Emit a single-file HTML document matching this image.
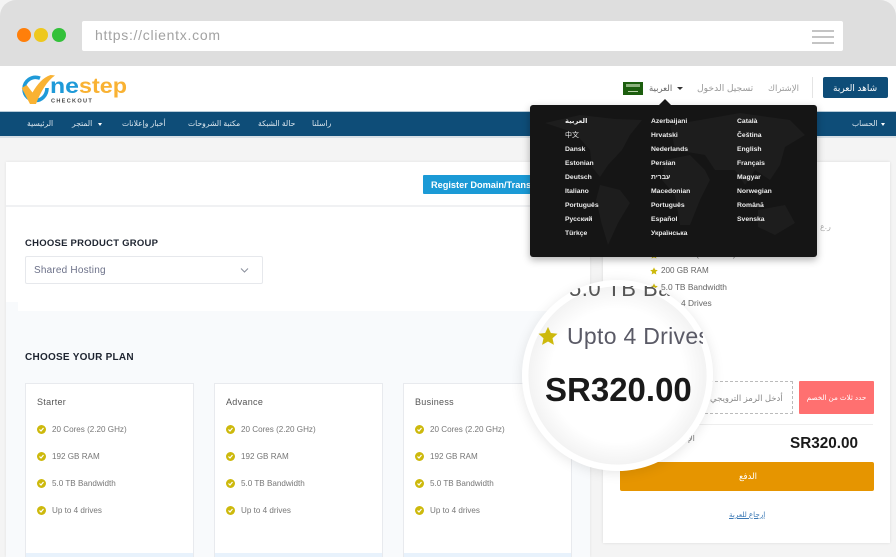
<!DOCTYPE html>
<html lang="ar"><head><meta charset="utf-8"><title>Onestep Checkout</title>
<style>
html,body{margin:0;padding:0;background:#fff}
#p{position:relative;width:896px;height:557px;overflow:hidden;background:#f4f4f4;font-family:"Liberation Sans","DejaVu Sans","Noto Sans CJK SC",sans-serif;color:#555}
#p div,#p a{position:absolute;white-space:nowrap}
.t{line-height:14px;transform:translateY(-7px)}
.nav{color:#dfe9f0;font-size:7.6px}
.lang{color:#eee;font-size:6.8px;font-weight:bold;line-height:14px}
.card{background:#fff;border:1px solid #e8eaee;box-sizing:border-box;width:169px;height:180px;top:383px}
.name{left:11px;top:11px;font-size:9px;color:#555;letter-spacing:.3px;line-height:14px}
.f{left:26px;font-size:8.1px;color:#777;line-height:12px;margin-top:1px}
.c{left:11px;width:9px;height:9px;border-radius:50%;background:#cdb90c}
.c svg{position:absolute;left:0;top:0}
.btm{left:0;right:0;height:9px;background:#e8f2fc;top:169px}
</style></head><body><div id="p">

<div style="left:0;top:0;width:896px;height:66px;background:#dedede;border-radius:16px 16px 0 0"></div>
<div style="left:17px;top:28px;width:14px;height:14px;border-radius:50%;background:#ff7f0a"></div>
<div style="left:34px;top:28px;width:14px;height:14px;border-radius:50%;background:#eec81e"></div>
<div style="left:52px;top:28px;width:14px;height:14px;border-radius:50%;background:#33c13a"></div>
<div style="left:82px;top:21px;width:761px;height:30px;background:#fff;border-radius:2px"></div>
<div style="left:95px;top:27px;font-size:14px;line-height:16px;color:#a2a2a2;letter-spacing:.72px">https://clientx.com</div>
<div style="left:812px;top:30px;width:22px;height:2px;background:#c4c4c4"></div>
<div style="left:812px;top:36px;width:22px;height:2px;background:#c4c4c4"></div>
<div style="left:812px;top:42px;width:22px;height:2px;background:#c4c4c4"></div>

<div style="left:0;top:66px;width:896px;height:46px;background:#fff"></div>

<svg style="position:absolute;left:18px;top:70px" width="115" height="36" viewBox="0 0 115 36">
<path d="M22 8.200C14 5 6 11 6 19C6 26 11.500 30.500 17.500 30.500C24 30.500 29 25 29 18" fill="none" stroke="#1f9ad8" stroke-width="3.600"/>
<path d="M3.700 18L8.700 15L14.500 22.500C19.500 14 25 7.500 32.500 5C33.500 5 37 5.500 37 5.500C29 11 23 21 18 34L12 34Z" fill="#f9b233"/>
<text x="32" y="23" font-family="Liberation Sans" font-size="21" fill="#1f9ad8" textLength="29" lengthAdjust="spacingAndGlyphs" font-weight="bold">ne</text>
<text x="61" y="23" font-family="Liberation Sans" font-size="21" fill="#f9b233" font-weight="bold" textLength="48" lengthAdjust="spacingAndGlyphs">step</text>
<text x="33" y="32.500" font-family="Liberation Sans" font-size="5.600" font-weight="bold" fill="#444" letter-spacing="1.300">CHECKOUT</text>
</svg>

<div style="left:623px;top:82px;width:20px;height:13px;background:#1c5e0e"></div>
<div style="left:626px;top:84px;width:14px;height:3px;background:#a9c59a;opacity:.8"></div>
<div style="left:628px;top:91px;width:10px;height:1px;background:#b7d0a8"></div>
<div class="t" style="left:649px;top:88px;font-size:8.500px;color:#666">العربية</div>
<div style="left:677px;top:87px;border:3px solid transparent;border-top:3px solid #333;border-bottom:0"></div>
<div class="t" style="left:697px;top:88px;font-size:9.200px;color:#999">تسجيل الدخول</div>
<div class="t" style="left:768px;top:88px;font-size:8.500px;color:#999">الإشتراك</div>
<div style="left:812px;top:77px;width:1px;height:21px;background:#e4e4e4"></div>
<div style="left:823px;top:77px;width:65px;height:21px;background:#0e4d78;border-radius:2px"></div>
<div class="t" style="left:833px;top:88px;font-size:9px;color:#fff">شاهد العربة</div>

<div style="left:0;top:111px;width:896px;height:1px;background:#b8cbd8"></div>
<div style="left:0;top:112px;width:896px;height:24px;background:#0e4d78"></div>
<div style="left:0;top:136px;width:896px;height:2px;background:#d7dfe5"></div>
<div class="t nav" style="left:27px;top:124px">الرئيسية</div>
<div class="t nav" style="left:72px;top:124px">المتجر</div>
<div style="left:98px;top:123px;border:2.500px solid transparent;border-top:3px solid #fff;border-bottom:0"></div>
<div class="t nav" style="left:122px;top:124px">أخبار وإعلانات</div>
<div class="t nav" style="left:188px;top:124px">مكتبة الشروحات</div>
<div class="t nav" style="left:258px;top:124px">حالة الشبكة</div>
<div class="t nav" style="left:312px;top:124px">راسلنا</div>
<div style="left:881px;top:123px;border:2.500px solid transparent;border-top:3px solid #fff;border-bottom:0"></div>
<div class="t nav" style="left:852px;top:124px">الحساب</div>

<!-- left panel -->
<div style="left:6px;top:162px;width:584px;height:395px;background:#fff;box-shadow:0 0 3px rgba(0,0,0,.08)"></div>
<div style="left:6px;top:205px;width:584px;height:2px;background:#f0f1f3"></div>
<div style="left:423px;top:175px;width:130px;height:19px;background:#1b9ad6;border-radius:1px"></div>
<div class="t" style="left:431px;top:185px;font-size:9.200px;font-weight:bold;color:#fff">Register Domain/Transfer</div>
<div class="t" style="left:25px;top:244px;font-size:9.500px;font-weight:bold;color:#1e2430;letter-spacing:.25px">CHOOSE PRODUCT GROUP</div>
<div style="left:25px;top:256px;width:238px;height:28px;background:#fff;border:1px solid #e6e8ec;box-sizing:border-box;border-radius:2px"></div>
<div class="t" style="left:34px;top:271px;font-size:10px;color:#6c7189;letter-spacing:.2px">Shared Hosting</div>
<svg style="position:absolute;left:240px;top:267px" width="9" height="7" viewBox="0 0 9 7"><path d="M1 1.500L4.500 5L8 1.500" fill="none" stroke="#8a8f9c" stroke-width="1"/></svg>
<div style="left:6px;top:302px;width:12px;height:255px;background:#f8fafc"></div>
<div style="left:18px;top:311px;width:572px;height:246px;background:#f8fafc"></div>
<div class="t" style="left:25px;top:358px;font-size:10px;font-weight:bold;color:#1e2430;letter-spacing:.25px">CHOOSE YOUR PLAN</div>

<div class="card" style="left:25px">
<div class="name">Starter</div>
<div class="c" style="top:41px"><svg width="9" height="9"><path d="M2.500 4.500L4 6L6.500 3" fill="none" stroke="#fff" stroke-width="1.200"/></svg></div><div class="f" style="top:39px">20 Cores (2.20 GHz)</div>
<div class="c" style="top:68px"><svg width="9" height="9"><path d="M2.500 4.500L4 6L6.500 3" fill="none" stroke="#fff" stroke-width="1.200"/></svg></div><div class="f" style="top:66px">192 GB RAM</div>
<div class="c" style="top:95px"><svg width="9" height="9"><path d="M2.500 4.500L4 6L6.500 3" fill="none" stroke="#fff" stroke-width="1.200"/></svg></div><div class="f" style="top:93px">5.0 TB Bandwidth</div>
<div class="c" style="top:122px"><svg width="9" height="9"><path d="M2.500 4.500L4 6L6.500 3" fill="none" stroke="#fff" stroke-width="1.200"/></svg></div><div class="f" style="top:120px">Up to 4 drives</div>
<div class="btm"></div></div>

<div class="card" style="left:214px">
<div class="name">Advance</div>
<div class="c" style="top:41px"><svg width="9" height="9"><path d="M2.500 4.500L4 6L6.500 3" fill="none" stroke="#fff" stroke-width="1.200"/></svg></div><div class="f" style="top:39px">20 Cores (2.20 GHz)</div>
<div class="c" style="top:68px"><svg width="9" height="9"><path d="M2.500 4.500L4 6L6.500 3" fill="none" stroke="#fff" stroke-width="1.200"/></svg></div><div class="f" style="top:66px">192 GB RAM</div>
<div class="c" style="top:95px"><svg width="9" height="9"><path d="M2.500 4.500L4 6L6.500 3" fill="none" stroke="#fff" stroke-width="1.200"/></svg></div><div class="f" style="top:93px">5.0 TB Bandwidth</div>
<div class="c" style="top:122px"><svg width="9" height="9"><path d="M2.500 4.500L4 6L6.500 3" fill="none" stroke="#fff" stroke-width="1.200"/></svg></div><div class="f" style="top:120px">Up to 4 drives</div>
<div class="btm"></div></div>

<div class="card" style="left:403px">
<div class="name">Business</div>
<div class="c" style="top:41px"><svg width="9" height="9"><path d="M2.500 4.500L4 6L6.500 3" fill="none" stroke="#fff" stroke-width="1.200"/></svg></div><div class="f" style="top:39px">20 Cores (2.20 GHz)</div>
<div class="c" style="top:68px"><svg width="9" height="9"><path d="M2.500 4.500L4 6L6.500 3" fill="none" stroke="#fff" stroke-width="1.200"/></svg></div><div class="f" style="top:66px">192 GB RAM</div>
<div class="c" style="top:95px"><svg width="9" height="9"><path d="M2.500 4.500L4 6L6.500 3" fill="none" stroke="#fff" stroke-width="1.200"/></svg></div><div class="f" style="top:93px">5.0 TB Bandwidth</div>
<div class="c" style="top:122px"><svg width="9" height="9"><path d="M2.500 4.500L4 6L6.500 3" fill="none" stroke="#fff" stroke-width="1.200"/></svg></div><div class="f" style="top:120px">Up to 4 drives</div>
<div class="btm"></div></div>

<!-- right panel -->
<div style="left:603px;top:162px;width:287px;height:381px;background:#fff;box-shadow:0 0 3px rgba(0,0,0,.1)"></div>
<div class="t" style="left:820px;top:227px;font-size:8px;color:#aaa">ر.ع</div>
<svg style="position:absolute;left:650px;top:251px" width="8" height="8" viewBox="0 0 24 24"><path d="M12 1l3.400 7.400 8 .9-6 5.400 1.700 7.900L12 18.600 4.900 22.600l1.700-7.900-6-5.400 8-.9z" fill="#cdb90c"/></svg>
<div class="t" style="left:661px;top:255px;font-size:8.100px;color:#666">20 Cores (2.20 GHz)</div>
<svg style="position:absolute;left:650px;top:267px" width="8" height="8" viewBox="0 0 24 24"><path d="M12 1l3.400 7.400 8 .9-6 5.400 1.700 7.900L12 18.600 4.900 22.600l1.700-7.900-6-5.400 8-.9z" fill="#cdb90c"/></svg>
<div class="t" style="left:661px;top:271px;font-size:8.100px;color:#666">200 GB RAM</div>
<svg style="position:absolute;left:650px;top:283px" width="8" height="8" viewBox="0 0 24 24"><path d="M12 1l3.400 7.400 8 .9-6 5.400 1.700 7.900L12 18.600 4.900 22.600l1.700-7.900-6-5.400 8-.9z" fill="#cdb90c"/></svg>
<div class="t" style="left:661px;top:287px;font-size:8.400px;color:#666">5.0 TB Bandwidth</div>
<div class="t" style="left:661px;top:303px;font-size:8.400px;color:#666">Upto 4 Drives</div>

<div style="left:620px;top:381px;width:173px;height:33px;box-sizing:border-box;border:1px dashed #bbb"></div>
<div class="t" style="left:710px;top:398px;font-size:8.500px;color:#888">أدخل الرمز الترويجي</div>
<div style="left:799px;top:381px;width:75px;height:33px;background:#ff7070;border-radius:1px"></div>
<div class="t" style="left:799px;width:75px;text-align:center;top:398px;font-size:7.200px;color:#fff">حدد ثلاث من الخصم</div>
<div style="left:620px;top:424px;width:253px;height:1px;background:#eee"></div>
<div class="t" style="left:667px;top:439px;font-size:8px;color:#777">الإجمالي</div>
<div class="t" style="left:790px;top:444px;font-size:15.300px;font-weight:bold;color:#1a1a1a">SR320.00</div>
<div style="left:620px;top:462px;width:254px;height:29px;background:#e69500;border-radius:2px"></div>
<div class="t" style="left:739px;top:476px;font-size:8.500px;color:#fff">الدفع</div>
<a class="t" style="left:729px;top:515px;font-size:7.200px;color:#3a78b5;text-decoration:underline">إرجاع للعربة</a>

<!-- lens -->
<div style="left:522px;top:280px;width:191px;height:191px;border-radius:50%;background:radial-gradient(circle closest-side,#fff 0%,#fff 70%,#f3f3f3 93%,#fff 93.500%);overflow:hidden;box-shadow:0 2px 12px rgba(0,0,0,.1)"></div>
<div style="left:522px;top:280px;width:191px;height:191px;border-radius:50%;overflow:hidden">
<div style="left:0;top:6px;width:191px;height:16px;overflow:hidden"><div style="left:47px;top:-7px;line-height:20px;font-size:22px;color:#555;letter-spacing:.5px">5.0 TB Bandwidth</div></div>
<svg style="position:absolute;left:16px;top:46px" width="20" height="20" viewBox="0 0 24 24"><path d="M12 1l3.400 7.400 8 .9-6 5.400 1.700 7.900L12 18.600 4.900 22.600l1.700-7.900-6-5.400 8-.9z" fill="#cdb90c"/></svg>
<div style="left:0;top:41px;width:181px;height:32px;overflow:hidden"><div style="left:45px;top:0;line-height:30px;font-size:23px;color:#5a5a66;letter-spacing:.3px">Upto 4 Drives</div></div>
<div style="left:23px;top:90px;line-height:40px;font-size:33px;font-weight:bold;color:#1a1a1a">SR320.00</div>
</div>

<!-- dropdown -->
<div style="left:530px;top:105px;width:287px;height:152px;background:#151515;border-radius:3px;box-shadow:0 3px 8px rgba(0,0,0,.3);overflow:hidden">
<svg style="position:absolute;left:0;top:0" width="287" height="152" viewBox="0 0 287 152">
<path d="M15 18L50 10L85 14L112 15L100 30L92 45L78 60L70 72L62 62L60 45L45 28Z" fill="#1d1d1d"/>
<path d="M70 80L90 85L100 98L88 118L78 140L72 120L66 95Z" fill="#1d1d1d"/>
<path d="M135 55L160 50L175 65L180 75L170 95L160 120L150 120L145 90L132 75Z" fill="#1d1d1d"/>
<path d="M140 20L170 15L210 8L260 15L275 30L255 42L250 60L240 75L225 65L215 80L205 65L185 65L175 50L145 45Z" fill="#1d1d1d"/>
<path d="M228 105L255 100L265 118L245 130L228 122Z" fill="#1d1d1d"/>
</svg>
</div>
<div style="left:659px;top:99px;border:6px solid transparent;border-bottom:6px solid #151515;border-top:0"></div>

<div class="lang" style="left:565px;top:115px">العربية</div>
<div class="lang" style="left:565px;top:129px;font-size:7px;font-weight:normal">中文</div>
<div class="lang" style="left:565px;top:143px">Dansk</div>
<div class="lang" style="left:565px;top:157px">Estonian</div>
<div class="lang" style="left:565px;top:171px">Deutsch</div>
<div class="lang" style="left:565px;top:185px">Italiano</div>
<div class="lang" style="left:565px;top:199px">Português</div>
<div class="lang" style="left:565px;top:213px">Русский</div>
<div class="lang" style="left:565px;top:227px">Türkçe</div>
<div class="lang" style="left:651px;top:115px">Azerbaijani</div>
<div class="lang" style="left:651px;top:129px">Hrvatski</div>
<div class="lang" style="left:651px;top:143px">Nederlands</div>
<div class="lang" style="left:651px;top:157px">Persian</div>
<div class="lang" style="left:651px;top:171px">עברית</div>
<div class="lang" style="left:651px;top:185px">Macedonian</div>
<div class="lang" style="left:651px;top:199px">Português</div>
<div class="lang" style="left:651px;top:213px">Español</div>
<div class="lang" style="left:651px;top:227px">Українська</div>
<div class="lang" style="left:737px;top:115px">Català</div>
<div class="lang" style="left:737px;top:129px">Čeština</div>
<div class="lang" style="left:737px;top:143px">English</div>
<div class="lang" style="left:737px;top:157px">Français</div>
<div class="lang" style="left:737px;top:171px">Magyar</div>
<div class="lang" style="left:737px;top:185px">Norwegian</div>
<div class="lang" style="left:737px;top:199px">Română</div>
<div class="lang" style="left:737px;top:213px">Svenska</div>

</div></body></html>
